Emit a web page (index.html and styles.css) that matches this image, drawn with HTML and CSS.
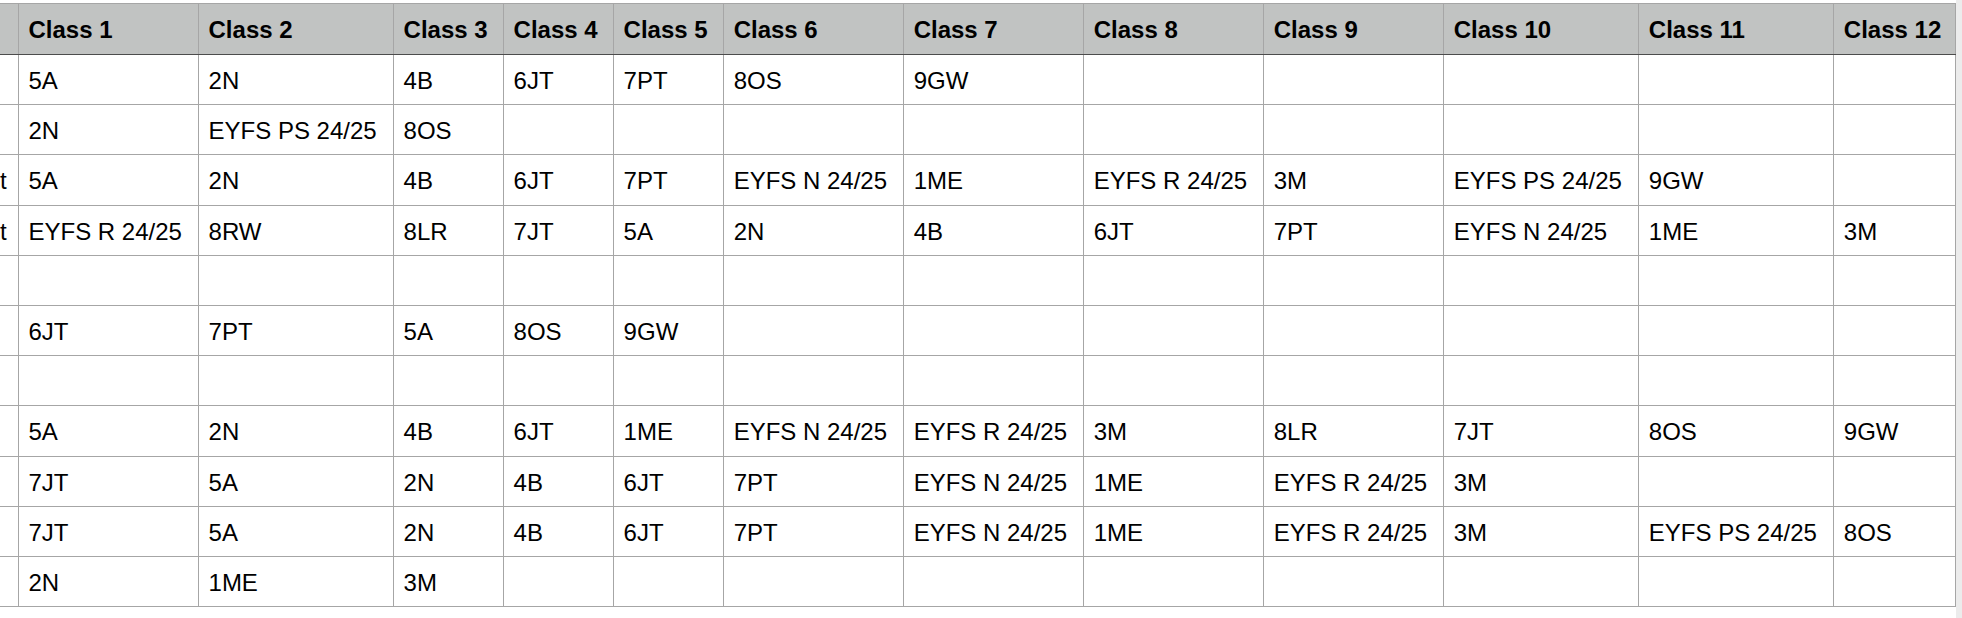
FILE: index.html
```html
<!DOCTYPE html>
<html lang="en">
<head>
<meta charset="utf-8">
<title>Classes</title>
<link rel="stylesheet" href="styles.css">
</head>
<body>
<div class="sheet">
  <table class="grid">
    <colgroup>
      <col class="c-label">
      <col class="c-w180">
      <col class="c-w195">
      <col class="c-w110">
      <col class="c-w110">
      <col class="c-w110">
      <col class="c-w180">
      <col class="c-w180">
      <col class="c-w180">
      <col class="c-w180">
      <col class="c-w195">
      <col class="c-w195">
      <col class="c-last">
    </colgroup>
    <thead>
      <tr>
        <th class="label"></th>
        <th>Class 1</th><th>Class 2</th><th>Class 3</th><th>Class 4</th><th>Class 5</th><th>Class 6</th>
        <th>Class 7</th><th>Class 8</th><th>Class 9</th><th>Class 10</th><th>Class 11</th><th>Class 12</th>
      </tr>
    </thead>
    <tbody>
      <tr><td class="label"></td><td>5A</td><td>2N</td><td>4B</td><td>6JT</td><td>7PT</td><td>8OS</td><td>9GW</td><td></td><td></td><td></td><td></td><td></td></tr>
      <tr><td class="label"></td><td>2N</td><td>EYFS PS 24/25</td><td>8OS</td><td></td><td></td><td></td><td></td><td></td><td></td><td></td><td></td><td></td></tr>
      <tr><td class="label">t</td><td>5A</td><td>2N</td><td>4B</td><td>6JT</td><td>7PT</td><td>EYFS N 24/25</td><td>1ME</td><td>EYFS R 24/25</td><td>3M</td><td>EYFS PS 24/25</td><td>9GW</td><td></td></tr>
      <tr><td class="label">t</td><td>EYFS R 24/25</td><td>8RW</td><td>8LR</td><td>7JT</td><td>5A</td><td>2N</td><td>4B</td><td>6JT</td><td>7PT</td><td>EYFS N 24/25</td><td>1ME</td><td>3M</td></tr>
      <tr><td class="label"></td><td></td><td></td><td></td><td></td><td></td><td></td><td></td><td></td><td></td><td></td><td></td><td></td></tr>
      <tr><td class="label"></td><td>6JT</td><td>7PT</td><td>5A</td><td>8OS</td><td>9GW</td><td></td><td></td><td></td><td></td><td></td><td></td><td></td></tr>
      <tr><td class="label"></td><td></td><td></td><td></td><td></td><td></td><td></td><td></td><td></td><td></td><td></td><td></td><td></td></tr>
      <tr><td class="label"></td><td>5A</td><td>2N</td><td>4B</td><td>6JT</td><td>1ME</td><td>EYFS N 24/25</td><td>EYFS R 24/25</td><td>3M</td><td>8LR</td><td>7JT</td><td>8OS</td><td>9GW</td></tr>
      <tr><td class="label"></td><td>7JT</td><td>5A</td><td>2N</td><td>4B</td><td>6JT</td><td>7PT</td><td>EYFS N 24/25</td><td>1ME</td><td>EYFS R 24/25</td><td>3M</td><td></td><td></td></tr>
      <tr><td class="label"></td><td>7JT</td><td>5A</td><td>2N</td><td>4B</td><td>6JT</td><td>7PT</td><td>EYFS N 24/25</td><td>1ME</td><td>EYFS R 24/25</td><td>3M</td><td>EYFS PS 24/25</td><td>8OS</td></tr>
      <tr><td class="label"></td><td>2N</td><td>1ME</td><td>3M</td><td></td><td></td><td></td><td></td><td></td><td></td><td></td><td></td><td></td></tr>
    </tbody>
  </table>
  <div class="scrolltrack"></div>
</div>
</body>
</html>
```
FILE: styles.css
```css
html, body {
  margin: 0;
  padding: 0;
  background: #ffffff;
}

body {
  font-family: "Liberation Sans", Arial, Helvetica, sans-serif;
  color: #000;
  overflow: hidden;
}

.sheet {
  display: flex;
  align-items: flex-start;
  padding-top: 3px;
  height: 615px;
}

.grid {
  border-collapse: collapse;
  table-layout: fixed;
  width: 1956px;
  flex: none;
}

.c-label { width: 18px; }
.c-w180 { width: 180px; }
.c-w195 { width: 195px; }
.c-w110 { width: 110px; }
.c-last { width: 122px; }

.grid th,
.grid td {
  border: 1px solid #a6a6a6;
  padding: 2px 0 0 10px;
  text-align: left;
  white-space: nowrap;
  overflow: hidden;
  font-size: 24px;
  line-height: 27px;
  vertical-align: middle;
}

.grid thead tr { height: 51px; }
.grid tbody tr { height: 50.2px; }

.grid th {
  background: #c1c3c2;
  font-weight: bold;
  border-bottom: 1px solid #4c4c4c;
  padding-top: 1px;
}

.grid th.label {
  padding-top: 1px;
}

.grid .label {
  border-left: none;
  padding: 2px 11px 0 0;
  text-align: right;
}

.grid tbody td { background: #ffffff; }

.scrolltrack {
  flex: 1;
  align-self: stretch;
  margin-top: -3px;
  background: #ececec;
}
```
